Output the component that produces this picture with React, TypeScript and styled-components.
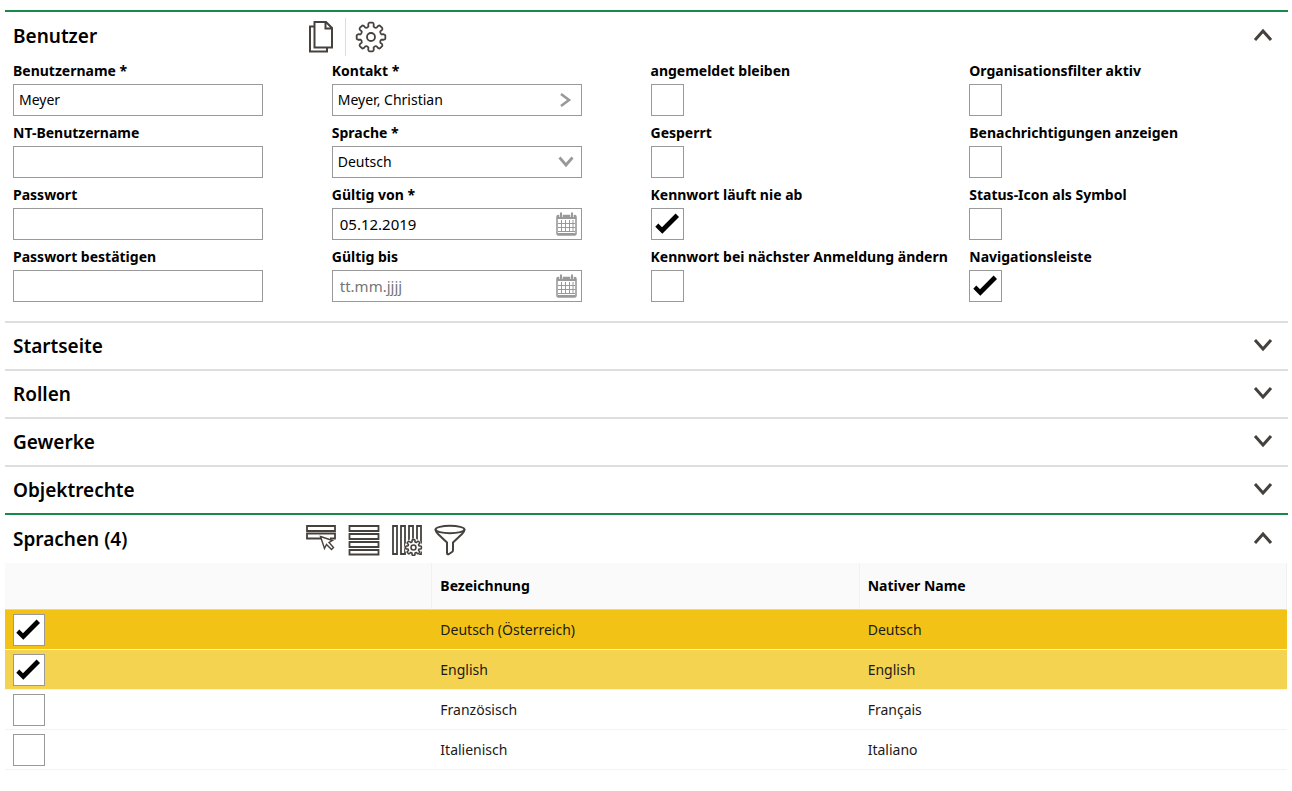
import React from "react";
import styled, { createGlobalStyle, css } from "styled-components";

const GlobalStyle = createGlobalStyle`
  *, *::before, *::after { box-sizing: border-box; }
  body {
    margin: 0;
    background: #fff;
    color: #000;
    font: 14px/22px "Noto Sans", "Open Sans", sans-serif;
  }
  button, input, select { font: inherit; color: inherit; }
`;

const ink = "#46413d";
const line = "#999999";

const Page = styled.main`
  padding: 10px 4px 20px 5px;
`;

const Panel = styled.section<{ $open?: boolean }>`
  border-top: 2px solid ${(p) => (p.$open ? "#178a4a" : "#dedede")};
`;

const PanelHeader = styled.header<{ $open?: boolean }>`
  display: flex;
  align-items: center;
  height: ${(p) => (p.$open ? 48 : 46)}px;
  padding: 0 12px 0 8px;
`;

const PanelTitle = styled.h2`
  flex: 0 0 289px;
  margin: 0;
  font-size: 19px;
  line-height: 26px;
  font-weight: 600;
`;

const Toolbar = styled.div`
  display: flex;
  flex: 1;
  align-items: center;
  gap: 6px;
  padding-top: 2px;
`;

const ToolButton = styled.button<{ $separated?: boolean }>`
  display: flex;
  align-items: center;
  justify-content: center;
  width: 37px;
  height: 38px;
  padding: 0;
  border: 0;
  background: none;
  cursor: pointer;
  ${(p) =>
    p.$separated &&
    css`
      width: 50px;
      border-left: 1px solid #dcdcdc;
    `}
`;

const ToggleButton = styled.button`
  display: flex;
  align-items: center;
  justify-content: center;
  width: 26px;
  height: 26px;
  margin-bottom: 2px;
  padding: 0;
  border: 0;
  background: none;
  cursor: pointer;
`;

const Form = styled.form`
  display: grid;
  grid-template-columns: repeat(4, minmax(0, 1fr));
  grid-template-rows: repeat(4, auto);
  grid-auto-flow: column;
  row-gap: 6px;
  padding: 0 0 19px 8px;
`;

const Field = styled.div`
  display: flex;
  flex-direction: column;
  align-items: flex-start;
  gap: 2px;
`;

const FieldLabel = styled.label`
  font-weight: 700;
  white-space: nowrap;
`;

const Control = styled.div`
  position: relative;
  display: flex;
  width: calc(100% - 69px);
  height: 32px;
  border: 1px solid ${line};
  background: #fff;
`;

const TextInput = styled.input<{ $date?: boolean }>`
  flex: 1;
  min-width: 0;
  padding: 0 5px;
  border: 0;
  outline: 0;
  background: none;
  ${(p) =>
    p.$date &&
    css`
      padding-left: 7px;
      font-size: 15px;
    `}
  &::placeholder {
    color: #757575;
    opacity: 1;
  }
`;

const Select = styled.select`
  flex: 1;
  padding: 0 32px 0 5px;
  border: 0;
  outline: 0;
  appearance: none;
  background: none;
`;

const InnerButton = styled.button`
  display: flex;
  align-items: center;
  justify-content: center;
  width: 28px;
  padding: 0 1px 0 0;
  border: 0;
  background: none;
  cursor: pointer;
`;

const SelectArrow = styled.span`
  position: absolute;
  top: 0;
  right: 0;
  bottom: 0;
  display: flex;
  align-items: center;
  justify-content: center;
  width: 30px;
  pointer-events: none;
`;

const TickBox = styled.span<{ $compact?: boolean }>`
  position: relative;
  display: flex;
  width: ${(p) => (p.$compact ? 32 : 33)}px;
  height: 32px;

  input {
    width: 100%;
    height: 100%;
    margin: 0;
    border: 1px solid ${line};
    appearance: none;
    background: #fff;
    cursor: pointer;
  }
  svg {
    position: absolute;
    top: 5px;
    left: ${(p) => (p.$compact ? 3 : 4)}px;
    visibility: hidden;
    pointer-events: none;
  }
  input:checked + svg { visibility: visible; }
`;

const Table = styled.table`
  width: calc(100% - 1px);
  border-collapse: separate;
  border-spacing: 0;
  table-layout: fixed;
`;

const HeadCell = styled.th`
  height: 47px;
  padding: 0 8px;
  border-right: 1px solid #f1f1f1;
  border-bottom: 1px solid #d3d3da;
  background: #fafafa;
  font-weight: 700;
  text-align: left;
`;

const Row = styled.tr<{ $tone: string }>`
  background: ${(p) => p.$tone};
`;

const Cell = styled.td`
  height: 40px;
  padding: 0 8px;
  border-bottom: 1px solid #f3f3f3;
  color: #1a1a1a;
`;

function Tick({ id, label, checked, compact }: { id?: string; label?: string; checked?: boolean; compact?: boolean }) {
  return (
    <TickBox $compact={compact}>
      <input type="checkbox" id={id} aria-label={label} defaultChecked={checked} />
      <svg width="25" height="22" viewBox="0 0 25 22" aria-hidden="true">
        <path d="M0.3 13.8 L3.3 10.6 L7 14.2 L20.6 0.6 L24 4 L7.3 20.8 Z" fill="#000" />
      </svg>
    </TickBox>
  );
}

function Chevron({ up }: { up?: boolean }) {
  return (
    <svg width="20" height="14" viewBox="0 0 20 14" fill="none" stroke={ink} strokeWidth="3" aria-hidden="true">
      <path d={up ? "M2 12 L10 3 L18 12" : "M2 2 L10 11 L18 2"} />
    </svg>
  );
}

function CopyIcon() {
  return (
    <svg width="26" height="34" viewBox="0 0 26 34" fill="none" stroke={ink} strokeWidth="2" aria-hidden="true">
      <path d="M6.5 6.5 H2 V31.5 H19 V27.5" />
      <path d="M6.5 2 H18 L24 8 V27.5 H6.5 Z M17.5 2 V8.5 H24" />
    </svg>
  );
}

const gearPath = (() => {
  const teeth = 8;
  const point = (radius: number, deg: number) => {
    const a = (deg * Math.PI) / 180;
    return `${(16 + radius * Math.cos(a)).toFixed(2)} ${(16 + radius * Math.sin(a)).toFixed(2)}`;
  };
  let d = "";
  for (let i = 0; i < teeth; i++) {
    const c = (i * 360) / teeth - 90;
    d += `${i ? "L" : "M"}${point(10.8, c - 14)} L${point(13.2, c - 12)} Q${point(14.4, c - 10)} ${point(14.4, c - 6)}`;
    d += ` L${point(14.4, c + 6)} Q${point(14.4, c + 10)} ${point(13.2, c + 12)} L${point(10.8, c + 14)}`;
    d += ` Q${point(9.6, c + 22.5)} ${point(10.8, c + 31)} `;
  }
  return d + "Z";
})();

function GearIcon() {
  return (
    <svg width="32" height="32" viewBox="0 0 32 32" fill="none" stroke={ink} strokeWidth="1.8" strokeLinejoin="round" aria-hidden="true">
      <path d={gearPath} />
      <circle cx="16" cy="16" r="4" />
    </svg>
  );
}

function SelectRowIcon() {
  return (
    <svg width="32" height="32" viewBox="0 0 32 32" fill="none" stroke={ink} strokeWidth="1.8" aria-hidden="true">
      <path d="M2 2 H30 V7 H2 Z M16 14.5 H2 V9.5 H30 V14.5 H25" />
      <path d="M15.5 12.5 L27.5 16.5 L24 18.5 L28.5 23.5 L26.5 25.5 L21.5 20.5 L19.5 24.5 Z" fill="#fff" strokeWidth="1.4" />
    </svg>
  );
}

function RowsIcon() {
  return (
    <svg width="32" height="32" viewBox="0 0 32 32" fill="none" stroke={ink} strokeWidth="1.8" aria-hidden="true">
      <path d="M1.5 2 H30.5 V7 H1.5 Z M1.5 10 H30.5 V15 H1.5 Z M1.5 18 H30.5 V23 H1.5 Z M1.5 26 H30.5 V30.5 H1.5 Z" />
    </svg>
  );
}

function ColumnsGearIcon() {
  return (
    <svg width="32" height="32" viewBox="0 0 32 32" fill="none" stroke={ink} strokeWidth="1.8" aria-hidden="true">
      <path d="M2 2 H6 V30 H2 Z M10 2 H14 V30 H10 Z M18 2 H22 V30 H18 Z M26 2 H30 V30 H26 Z" />
      <circle cx="22.5" cy="23.5" r="9" fill="#fff" stroke="none" />
      <g transform="translate(13.7 14.7) scale(0.55)" strokeWidth="2.8">
        <path d={gearPath} fill="#fff" />
        <circle cx="16" cy="16" r="4.5" />
      </g>
    </svg>
  );
}

function FilterIcon() {
  return (
    <svg width="32" height="32" viewBox="0 0 32 32" fill="none" stroke={ink} strokeWidth="2" strokeLinejoin="round" aria-hidden="true">
      <ellipse cx="16" cy="5.5" rx="14.5" ry="3.7" />
      <path d="M1.5 5.5 C1.5 7.5 2.5 8.5 4 10 L13 18.5 V29 C13 30.5 14 30.5 15 30 L18 28 C18.8 27.5 19 27 19 26 V18.5 L28 10 C29.5 8.5 30.5 7.5 30.5 5.5" />
    </svg>
  );
}

function CalendarIcon() {
  return (
    <svg width="21" height="24" viewBox="0 0 21 24" fill="none" stroke={line} aria-hidden="true">
      <rect x="1" y="3.5" width="19" height="19.5" rx="1.5" strokeWidth="1.6" />
      <path d="M1 3 H20 V7 H1 Z" fill={line} stroke="none" />
      <path d="M5 0.5 V5 M16 0.5 V5" strokeWidth="3.4" stroke="#fff" />
      <path d="M5 0.5 V5 M16 0.5 V5" strokeWidth="2" />
      <path d="M5.5 8 V20 M9.5 8 V20 M13.5 8 V20 M17 8 V20 M2 11.5 H19 M2 15.5 H19 M2 19.5 H19" strokeWidth="1" />
      <path d="M2 22 H19" strokeWidth="2" />
    </svg>
  );
}

function TextField({ id, label, value = "", type = "text" }: { id: string; label: string; value?: string; type?: string }) {
  return (
    <Field>
      <FieldLabel htmlFor={id}>{label}</FieldLabel>
      <Control>
        <TextInput id={id} type={type} defaultValue={value} />
      </Control>
    </Field>
  );
}

function DateField({ id, label, value }: { id: string; label: string; value?: string }) {
  return (
    <Field>
      <FieldLabel htmlFor={id}>{label}</FieldLabel>
      <Control>
        <TextInput id={id} $date defaultValue={value} placeholder="tt.mm.jjjj" />
        <InnerButton type="button" aria-label="Kalender">
          <CalendarIcon />
        </InnerButton>
      </Control>
    </Field>
  );
}

function TickField({ id, label, checked }: { id: string; label: string; checked?: boolean }) {
  return (
    <Field>
      <FieldLabel htmlFor={id}>{label}</FieldLabel>
      <Tick id={id} checked={checked} />
    </Field>
  );
}

function Section({ title, open, tools, children }: { title: string; open?: boolean; tools?: React.ReactNode; children?: React.ReactNode }) {
  return (
    <Panel $open={open}>
      <PanelHeader $open={open}>
        <PanelTitle>{title}</PanelTitle>
        <Toolbar>{tools}</Toolbar>
        <ToggleButton type="button" aria-expanded={!!open} aria-label={title}>
          <Chevron up={open} />
        </ToggleButton>
      </PanelHeader>
      {children}
    </Panel>
  );
}

const languages = [
  { name: "Deutsch (Österreich)", native: "Deutsch", checked: true, tone: "#f2c316" },
  { name: "English", native: "English", checked: true, tone: "#f4d351" },
  { name: "Französisch", native: "Français", checked: false, tone: "#ffffff" },
  { name: "Italienisch", native: "Italiano", checked: false, tone: "#ffffff" },
];

export default function App() {
  return (
    <>
      <GlobalStyle />
      <Page>
        <Section
          title="Benutzer"
          open
          tools={
            <>
              <ToolButton type="button" aria-label="Kopieren"><CopyIcon /></ToolButton>
              <ToolButton type="button" aria-label="Einstellungen" $separated><GearIcon /></ToolButton>
            </>
          }
        >
          <Form>
            <TextField id="user" label="Benutzername *" value="Meyer" />
            <TextField id="nt-user" label="NT-Benutzername" />
            <TextField id="password" label="Passwort" type="password" />
            <TextField id="password-repeat" label="Passwort bestätigen" type="password" />

            <Field>
              <FieldLabel htmlFor="contact">Kontakt *</FieldLabel>
              <Control>
                <TextInput id="contact" defaultValue="Meyer, Christian" />
                <InnerButton type="button" aria-label="Kontakt öffnen">
                  <svg width="12" height="16" viewBox="0 0 12 16" fill="none" stroke={line} strokeWidth="2.6" aria-hidden="true">
                    <path d="M1 2 L9 8 L1 14" />
                  </svg>
                </InnerButton>
              </Control>
            </Field>
            <Field>
              <FieldLabel htmlFor="language">Sprache *</FieldLabel>
              <Control>
                <Select id="language" defaultValue="Deutsch">
                  <option>Deutsch</option>
                </Select>
                <SelectArrow>
                  <svg width="16" height="12" viewBox="0 0 16 12" fill="none" stroke={line} strokeWidth="2.8" aria-hidden="true">
                    <path d="M1.5 1.5 L8 9 L14.5 1.5" />
                  </svg>
                </SelectArrow>
              </Control>
            </Field>
            <DateField id="valid-from" label="Gültig von *" value="05.12.2019" />
            <DateField id="valid-to" label="Gültig bis" />

            <TickField id="stay" label="angemeldet bleiben" />
            <TickField id="locked" label="Gesperrt" />
            <TickField id="no-expiry" label="Kennwort läuft nie ab" checked />
            <TickField id="change-next" label="Kennwort bei nächster Anmeldung ändern" />

            <TickField id="org-filter" label="Organisationsfilter aktiv" />
            <TickField id="notify" label="Benachrichtigungen anzeigen" />
            <TickField id="status-icon" label="Status-Icon als Symbol" />
            <TickField id="nav" label="Navigationsleiste" checked />
          </Form>
        </Section>

        <Section title="Startseite" />
        <Section title="Rollen" />
        <Section title="Gewerke" />
        <Section title="Objektrechte" />

        <Section
          title="Sprachen (4)"
          open
          tools={
            <>
              <ToolButton type="button" aria-label="Zeile auswählen"><SelectRowIcon /></ToolButton>
              <ToolButton type="button" aria-label="Alle Zeilen"><RowsIcon /></ToolButton>
              <ToolButton type="button" aria-label="Spalten einstellen"><ColumnsGearIcon /></ToolButton>
              <ToolButton type="button" aria-label="Filter"><FilterIcon /></ToolButton>
            </>
          }
        >
          <Table>
            <thead>
              <tr>
                <HeadCell scope="col" aria-label="Auswahl" />
                <HeadCell scope="col">Bezeichnung</HeadCell>
                <HeadCell scope="col">Nativer Name</HeadCell>
              </tr>
            </thead>
            <tbody>
              {languages.map((l) => (
                <Row key={l.name} $tone={l.tone}>
                  <Cell><Tick compact label={l.name} checked={l.checked} /></Cell>
                  <Cell>{l.name}</Cell>
                  <Cell>{l.native}</Cell>
                </Row>
              ))}
            </tbody>
          </Table>
        </Section>
      </Page>
    </>
  );
}
